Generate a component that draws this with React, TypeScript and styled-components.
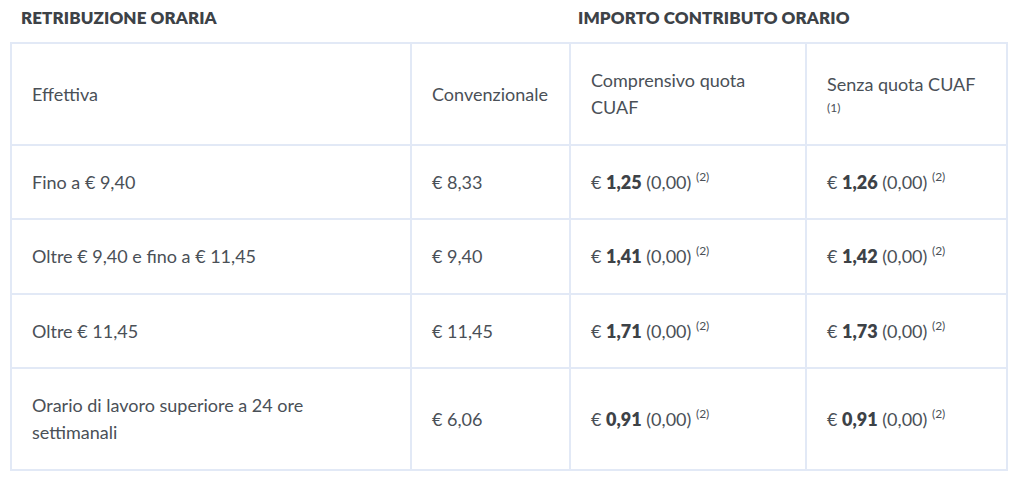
import React from "react";
import styled, { createGlobalStyle } from "styled-components";

const Global = createGlobalStyle`
  html, body { margin: 0; padding: 0; background: #ffffff; }
  body { font-family: Lato, "Noto Sans", sans-serif; color: #4a5057; }
`;

const Page = styled.div`
  padding: 0 18px 0 10px;
  width: 1024px;
  box-sizing: border-box;
`;

const Titles = styled.div`
  display: grid;
  grid-template-columns: 559px 1fr;
  height: 42px;
  align-items: center;
`;

const Title = styled.h3<{ $pad: number }>`
  margin: 0;
  padding-left: ${(p) => p.$pad}px;
  font-size: 17px;
  font-weight: 800;
  color: #3d4247;
  letter-spacing: 0.1px;
  line-height: 20px;
  padding-bottom: 6px;
`;

const Table = styled.table`
  border-collapse: collapse;
  width: 996px;
  table-layout: fixed;
  border: 2px solid #e2e9f6;
`;

const Cell = styled.td`
  border: 2px solid #e2e9f6;
  padding: 23px 20px 22.5px;
  vertical-align: middle;
  font-size: 18px;
  line-height: 27px;
  color: #4a5057;
`;

const Strong = styled.b`
  font-weight: 800;
  color: #3d4247;
`;

const Sup = styled.sup`
  font-size: 12px;
  line-height: 0;
  vertical-align: 0.65em;
`;

const Note = styled.span`
  display: block;
  font-size: 12px;
  line-height: 20px;
`;

type Row = { eff: string; conv: string; a: string; b: string };

const rows: Row[] = [
  { eff: "Fino a € 9,40", conv: "€ 8,33", a: "1,25", b: "1,26" },
  { eff: "Oltre € 9,40 e fino a € 11,45", conv: "€ 9,40", a: "1,41", b: "1,42" },
  { eff: "Oltre € 11,45", conv: "€ 11,45", a: "1,71", b: "1,73" },
  {
    eff: "Orario di lavoro superiore a 24 ore settimanali",
    conv: "€ 6,06",
    a: "0,91",
    b: "0,91",
  },
];

const Amount = ({ v }: { v: string }) => (
  <>
    € <Strong>{v}</Strong> (0,00) <Sup>(2)</Sup>
  </>
);

export default function App() {
  return (
    <Page>
      <Global />
      <Titles>
        <Title $pad={11}>RETRIBUZIONE ORARIA</Title>
        <Title $pad={9}>IMPORTO CONTRIBUTO ORARIO</Title>
      </Titles>
      <Table>
        <colgroup>
          <col style={{ width: 400 }} />
          <col style={{ width: 159 }} />
          <col style={{ width: 236 }} />
          <col style={{ width: 201 }} />
        </colgroup>
        <tbody>
          <tr>
            <Cell>Effettiva</Cell>
            <Cell>Convenzionale</Cell>
            <Cell>
              Comprensivo quota
              <br />
              CUAF
            </Cell>
            <Cell>
              Senza quota CUAF
              <Note>(1)</Note>
            </Cell>
          </tr>
          {rows.map((r) => (
            <tr key={r.eff}>
              <Cell>{r.eff}</Cell>
              <Cell>{r.conv}</Cell>
              <Cell>
                <Amount v={r.a} />
              </Cell>
              <Cell>
                <Amount v={r.b} />
              </Cell>
            </tr>
          ))}
        </tbody>
      </Table>
    </Page>
  );
}
